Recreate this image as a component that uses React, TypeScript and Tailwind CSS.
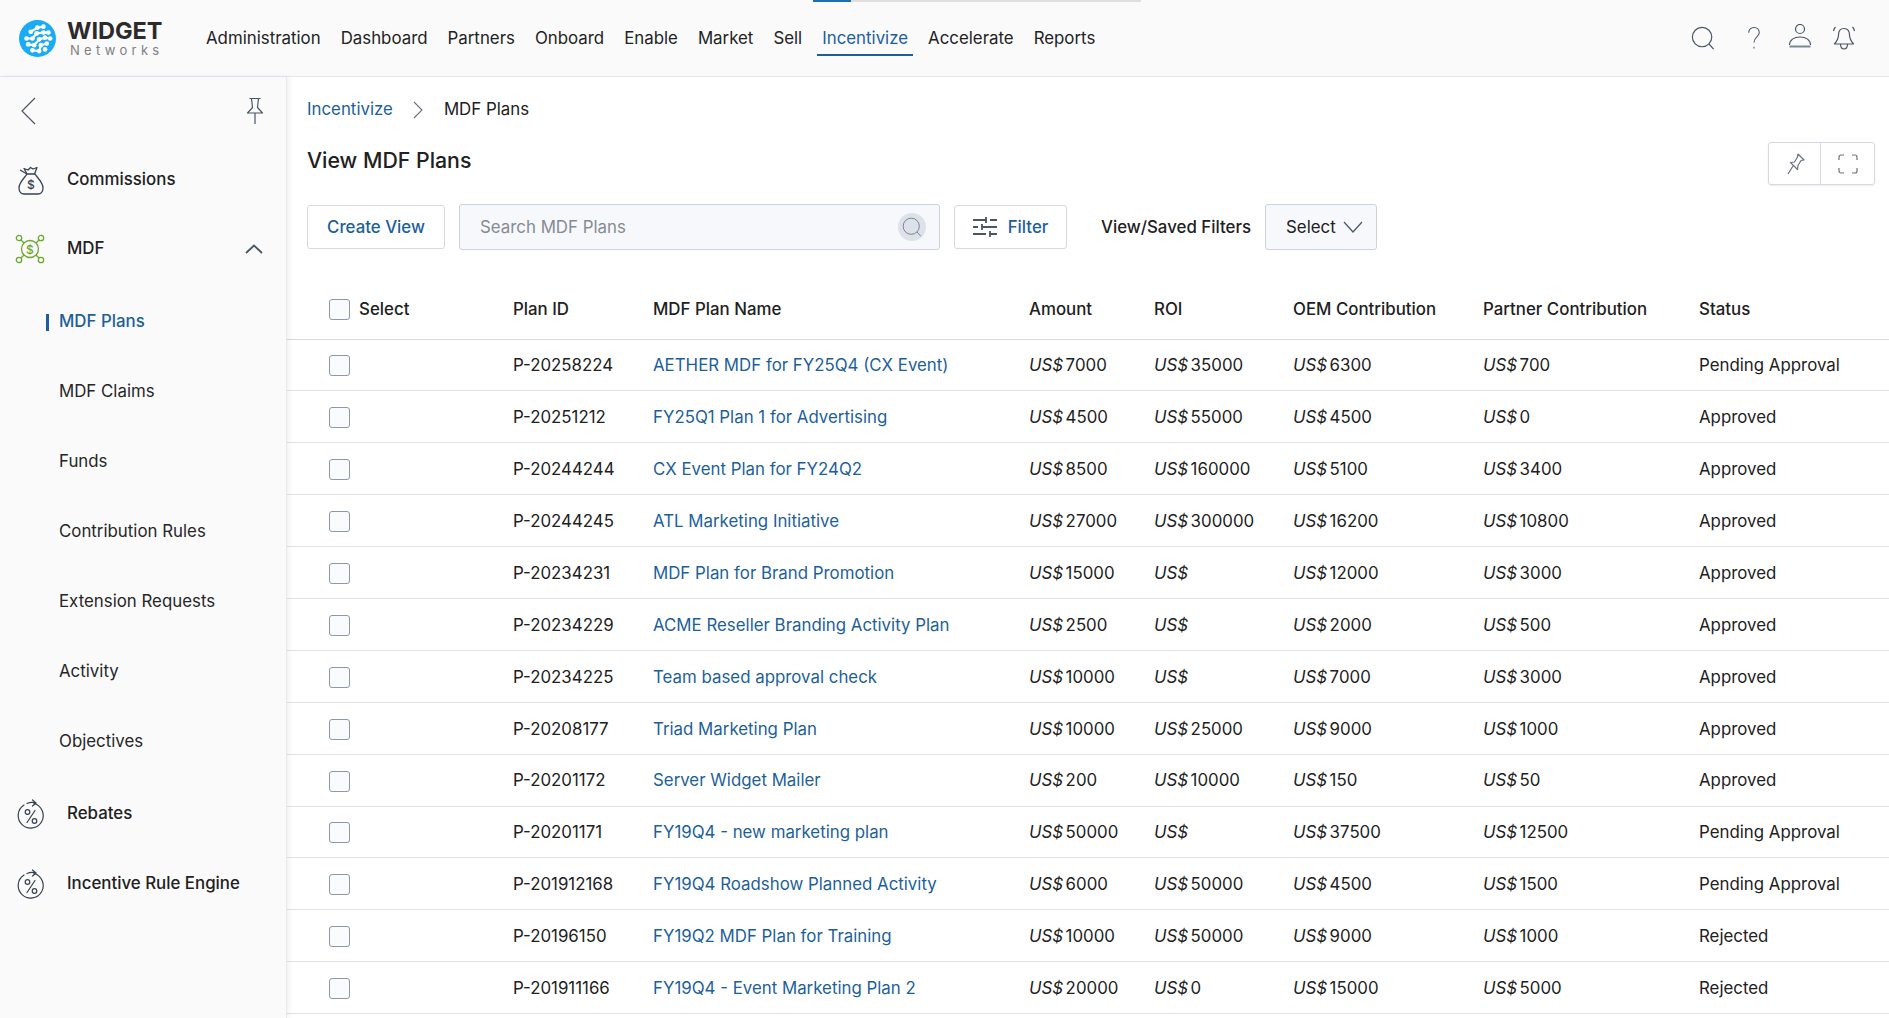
import React from "react";

const navItems = ["Administration", "Dashboard", "Partners", "Onboard", "Enable", "Market", "Sell", "Incentivize", "Accelerate", "Reports"];

const subItems = ["MDF Plans", "MDF Claims", "Funds", "Contribution Rules", "Extension Requests", "Activity", "Objectives"];

const plans = [
  ["P-20258224", "AETHER MDF for FY25Q4 (CX Event)", "7000", "35000", "6300", "700", "Pending Approval"],
  ["P-20251212", "FY25Q1 Plan 1 for Advertising", "4500", "55000", "4500", "0", "Approved"],
  ["P-20244244", "CX Event Plan for FY24Q2", "8500", "160000", "5100", "3400", "Approved"],
  ["P-20244245", "ATL Marketing Initiative", "27000", "300000", "16200", "10800", "Approved"],
  ["P-20234231", "MDF Plan for Brand Promotion", "15000", "", "12000", "3000", "Approved"],
  ["P-20234229", "ACME Reseller Branding Activity Plan", "2500", "", "2000", "500", "Approved"],
  ["P-20234225", "Team based approval check", "10000", "", "7000", "3000", "Approved"],
  ["P-20208177", "Triad Marketing Plan", "10000", "25000", "9000", "1000", "Approved"],
  ["P-20201172", "Server Widget Mailer", "200", "10000", "150", "50", "Approved"],
  ["P-20201171", "FY19Q4 - new marketing plan", "50000", "", "37500", "12500", "Pending Approval"],
  ["P-201912168", "FY19Q4 Roadshow Planned Activity", "6000", "50000", "4500", "1500", "Pending Approval"],
  ["P-20196150", "FY19Q2 MDF Plan for Training", "10000", "50000", "9000", "1000", "Rejected"],
  ["P-201911166", "FY19Q4 - Event Marketing Plan 2", "20000", "0", "15000", "5000", "Rejected"],
];

function Logo() {
  const dots = [
    [22, 9], [29, 8], [14, 14], [21, 16], [29, 15], [35, 15], [9, 22], [16, 22], [24, 23], [31, 21], [37, 22],
    [11, 29], [18, 30], [26, 30], [33, 28], [16, 36], [24, 37], [31, 35],
  ];
  return (
    <svg width="37" height="37" viewBox="0 0 44 44">
      <circle cx="22" cy="22" r="22" fill="#19abf5" />
      <g stroke="#fff" strokeWidth="2.600" strokeLinecap="round" strokeLinejoin="round" fill="none">
        <path d="M14 14 22 9 29 8" />
        <path d="M9 22 16 22 21 16 29 15 35 15" />
        <path d="M11 29 18 30 24 23 31 21 37 22" />
        <path d="M16 36 24 37 26 30 33 28" />
      </g>
      {dots.map(([x, y], i) => (
        <circle key={i} cx={x} cy={y} r="2.800" fill="#fff" />
      ))}
    </svg>
  );
}

function Search({ size = 24, color = "#4b5563" }: { size?: number; color?: string }) {
  return (
    <svg width={size} height={size} viewBox="0 0 26 26" fill="none" stroke={color} strokeWidth="1.300">
      <circle cx="12" cy="12" r="10.500" />
      <path d="M19.500 19.500 24.500 25" />
    </svg>
  );
}

function PinIcon() {
  return (
    <svg width="18" height="28" viewBox="0 0 18 28" fill="none" stroke="#4b5563" strokeWidth="1.200" strokeLinejoin="round">
      <path d="M3.500 1.500h11M5.500 1.500l1 9-5 5.500h15l-5-5.500 1-9M9 16v11" />
    </svg>
  );
}

function BagIcon() {
  return (
    <svg width="26" height="30" viewBox="0 0 26 30" fill="none" stroke="#374151" strokeWidth="1.300" strokeLinejoin="round">
      <path d="M9 9 6 3.500l4 1.500 2.500-2.500L15 4l4-1.500L16.500 9" />
      <path d="M9 9h8c2 3.500 8 8 8 14 0 4-2.500 6-5 6H6c-2.500 0-5-2-5-6 0-6 6-10.500 8-14Z" />
      <path d="M2 5l7 4" />
      <text x="13" y="24" textAnchor="middle" fontSize="12" fontFamily="Inter" fill="#374151" stroke="none">$</text>
    </svg>
  );
}

function MdfIcon() {
  return (
    <svg width="30" height="30" viewBox="0 0 30 30" fill="none" stroke="#6aa82e" strokeWidth="1.300">
      <circle cx="15" cy="15" r="8.500" />
      <circle cx="4" cy="4" r="2.700" />
      <circle cx="26" cy="4" r="2.700" />
      <circle cx="4" cy="26" r="2.700" />
      <circle cx="26" cy="26" r="2.700" />
      <path d="M6 6 9 9M24 6 21 9M6 24 9 21M24 24 21 21" />
      <text x="15" y="19.500" textAnchor="middle" fontSize="12" fontFamily="Inter" fill="#6aa82e" stroke="none">$</text>
    </svg>
  );
}

function RebateIcon() {
  return (
    <svg width="28" height="30" viewBox="0 0 28 30" fill="none" stroke="#374151" strokeWidth="1.200" strokeLinecap="round">
      <path d="M17 4.500A12.500 12.500 0 1 1 7 6" />
      <path d="M10 4.500c3-1.500 6-1.500 9-.5M15.500 1 19 4l-3.500 3" />
      <circle cx="10.500" cy="13" r="2.300" />
      <circle cx="17.500" cy="22" r="2.300" />
      <path d="M18 11.500 10 23.500" />
    </svg>
  );
}

function Money({ value }: { value: string }) {
  return (
    <span>
      <i>US$</i>
      {value && <span className="ml-[2.500px]">{value}</span>}
    </span>
  );
}

function Check() {
  return <span className="block w-[21px] h-[21px] rounded-[3px] border border-[#8c98a8] bg-[#fafbfc]" />;
}

export default function App() {
  return (
    <div className="relative w-[1889px] h-[1018px] overflow-hidden bg-white text-[#212121] font-['Inter',sans-serif] text-[16.850px]">
      {/* page loading bar */}
      <div className="absolute top-0 left-[813px] flex h-[2px] w-[328px]">
        <div className="w-[38px] bg-[#1d6fb0]" />
        <div className="flex-1 bg-[#dedede]" />
      </div>

      <header className="flex items-center h-[77px] bg-[#fafafb] border-b border-[#e1e5ec]">
        <div className="flex items-center w-[206px] pl-[19px] shrink-0">
          <Logo />
          <div className="ml-[11px] flex flex-col items-start">
            <span className="text-[23.500px] leading-[24px] font-bold text-[#2b2b2b]">WIDGET</span>
            <span className="text-[13px] leading-[14px] text-[#808080] tracking-[4.300px] ml-[3px]">Networks</span>
          </div>
        </div>
        <nav className="flex items-center h-full gap-[20px] text-[#222]">
          {navItems.map((n) => (
            <a
              key={n}
              className={
                n === "Incentivize"
                  ? "flex items-center h-[34px] mt-[1px] px-[5px] -mx-[5px] text-[#1d5f9c] border-y-2 border-t-transparent border-b-[#1d5f9c]"
                  : "flex items-center h-[34px] mt-[1px]"
              }
            >
              {n}
            </a>
          ))}
        </nav>
        <div className="ml-auto flex items-center pr-[33px] text-[#4b5563]">
          <Search />
          <svg width="14" height="24" viewBox="0 0 16 26" fill="none" stroke="#4b5563" strokeWidth="1.200" className="ml-[32px]">
            <path d="M2 7c0-3.500 2.500-6 6-6s6 2.500 6 6c0 4-6 5-6 11" />
            <path d="M8 23v2" />
          </svg>
          <svg width="24" height="24" viewBox="0 0 24 24" fill="none" stroke="#4b5563" strokeWidth="1.200" className="ml-[27px] -mt-[4px]">
            <circle cx="12" cy="5" r="4.500" />
            <path d="M1.500 21c0-5 4.500-8 10.500-8s10.500 3 10.500 8" />
            <path d="M1.500 22.500h21" strokeWidth="2" stroke="#7d8694" />
          </svg>
          <svg width="24" height="24" viewBox="0 0 24 24" fill="none" stroke="#4b5563" strokeWidth="1.200" strokeLinejoin="round" className="ml-[20px]">
            <path d="M12 2.500c-4 0-5.500 3-5.500 6.500 0 4-1.500 6-4 9h19c-2.500-3-4-5-4-9 0-3.500-1.500-6.500-5.500-6.500Z" />
            <path d="M8.500 18c0 3 1.500 5 3.500 5s3.500-2 3.500-5M3.500 1C2.500 2 2 3 1.500 5M20.500 1c1 1 1.500 2 2 4" />
          </svg>
        </div>
      </header>

      <div className="flex h-[941px]">
        <aside className="w-[287px] shrink-0 bg-[#fafafb] border-r border-[#e6e9ee] shadow-[2px_0_5px_rgba(120,130,150,0.12)] z-10 pl-[15px]">
          <div className="flex items-center justify-between h-[67px] pr-[22px] pl-[5px]">
            <svg width="16" height="28" viewBox="0 0 16 28" fill="none" stroke="#4b5563" strokeWidth="1.200">
              <path d="M15 1 2 14l13 13" />
            </svg>
            <PinIcon />
          </div>
          <div className="flex items-center h-[72px] font-medium">
            <span className="w-[52px] pl-[3px]"><BagIcon /></span>
            Commissions
          </div>
          <div className="flex items-center h-[66px] font-medium pr-[23px]">
            <span className="w-[52px]"><MdfIcon /></span>
            MDF
            <svg width="18" height="10" viewBox="0 0 18 10" fill="none" stroke="#4b5563" strokeWidth="1.800" className="ml-auto">
              <path d="M1 9 9 1.500 17 9" />
            </svg>
          </div>
          <ul className="mt-[5px]">
            {subItems.map((s, i) => (
              <li key={s} className="flex items-center h-[70px] pl-[31px] relative">
                {i === 0 && <span className="absolute left-[31px] w-[3px] h-[17px] bg-[#1d5f9c]" />}
                <span className={i === 0 ? "pl-[13px] text-[#1d5f9c] font-medium" : "pl-[13px] text-[#262626]"}>{s}</span>
              </li>
            ))}
          </ul>
          <div className="flex items-center h-[72px] font-medium mt-[1px]">
            <span className="w-[52px] pl-[2px]"><RebateIcon /></span>
            Rebates
          </div>
          <div className="flex items-center h-[68px] font-medium">
            <span className="w-[52px] pl-[2px]"><RebateIcon /></span>
            Incentive Rule Engine
          </div>
        </aside>

        <main className="flex-1 min-w-0">
          <div className="flex items-center h-[64px] pl-[20px] pt-[1px]">
            <a className="text-[#1d5f9c]">Incentivize</a>
            <svg width="12" height="20" viewBox="0 0 12 20" fill="none" stroke="#6b7280" strokeWidth="1.100" className="mx-[19.500px]">
              <path d="M2 2l8 8-8 8" />
            </svg>
            <span>MDF Plans</span>
          </div>
          <div className="flex items-start justify-between h-[63px] pl-[20px] pr-[14px]">
            <h1 className="text-[21.300px] font-medium leading-[38px]">View MDF Plans</h1>
            <div className="flex h-[43px] mt-[1px] rounded-[3px] border border-[#d5d9e0] shadow-[0_1px_2px_rgba(0,0,0,0.08)]">
              <span className="flex items-center justify-center w-[52px] pl-[3px] border-r border-[#d5d9e0]">
                <svg width="20" height="22" viewBox="0 0 20 22" fill="none" stroke="#6b7280" strokeWidth="1.200" strokeLinejoin="round">
                  <path d="M12 1l6 6-3 .5-3 5-.5 4L4.500 9.500l4-.5 3-5ZM7 13l-5 8" />
                </svg>
              </span>
              <span className="flex items-center justify-center w-[53px]">
                <svg width="20" height="20" viewBox="0 0 20 20" fill="none" stroke="#6b7280" strokeWidth="1.200">
                  <path d="M1 6V3a2 2 0 0 1 2-2h3M14 1h3a2 2 0 0 1 2 2v3M19 14v3a2 2 0 0 1-2 2h-3M6 19H3a2 2 0 0 1-2-2v-3" />
                </svg>
              </span>
            </div>
          </div>
          <div className="flex items-center h-[46px] pl-[20px]">
            <button className="h-[44px] w-[138px] pt-[2px] rounded-[3px] border border-[#d5d9e0] text-[#1d5f9c] font-medium">Create View</button>
            <div className="flex items-center justify-between w-[481px] h-[46px] ml-[14px] pl-[20px] pr-[13px] rounded-[3px] border border-[#cdd3dc] bg-[#f6f8fb] text-[#868b93]">
              <span className="pt-[2px]">Search MDF Plans</span>
              <span className="flex items-center justify-center w-[28px] h-[28px] rounded-full bg-[#dde2ea]">
                <Search size={20} color="#7b8390" />
              </span>
            </div>
            <button className="flex items-center justify-center gap-[11px] h-[44px] w-[113px] ml-[14px] rounded-[3px] border border-[#d5d9e0] text-[#1d5f9c] font-medium">
              <svg width="24" height="20" viewBox="0 0 24 20" fill="none" stroke="#4b5563" strokeWidth="1.800">
                <path d="M0 3h13M17 3h7M13 0v6M0 10h5M9 10h15M9 7v6M0 17h13M17 17h7M17 14v6" />
              </svg>
              <span className="pt-[2px]">Filter</span>
            </button>
            <span className="ml-[34px] pt-[2px] font-medium">View/Saved Filters</span>
            <div className="flex items-center justify-between w-[112px] h-[46px] ml-[14px] pl-[20px] pr-[13px] rounded-[3px] border border-[#cdd3dc] bg-[#f6f8fb]">
              <span className="pt-[2px]">Select</span>
              <svg width="20" height="12" viewBox="0 0 20 12" fill="none" stroke="#4b5563" strokeWidth="1.200">
                <path d="M1 1l9 10 9-10" />
              </svg>
            </div>
          </div>

          <table className="w-full table-fixed border-collapse mt-[7px]">
            <colgroup>
              <col className="w-[226px]" />
              <col className="w-[140px]" />
              <col className="w-[376px]" />
              <col className="w-[125px]" />
              <col className="w-[139px]" />
              <col className="w-[190px]" />
              <col className="w-[216px]" />
              <col />
            </colgroup>
            <thead>
              <tr className="h-[82px] border-b border-[#d4d8de] text-left">
                <th className="font-medium align-bottom pb-[16px]">
                  <span className="flex items-center gap-[9px] pl-[42px]">
                    <Check />
                    Select
                  </span>
                </th>
                <th className="font-medium align-bottom pb-[16px]">Plan ID</th>
                <th className="font-medium align-bottom pb-[16px]">MDF Plan Name</th>
                <th className="font-medium align-bottom pb-[16px]">Amount</th>
                <th className="font-medium align-bottom pb-[16px]">ROI</th>
                <th className="font-medium align-bottom pb-[16px]">OEM Contribution</th>
                <th className="font-medium align-bottom pb-[16px]">Partner Contribution</th>
                <th className="font-medium align-bottom pb-[16px]">Status</th>
              </tr>
            </thead>
            <tbody>
              {plans.map((p) => (
                <tr key={p[0]} className="h-[51.900px] border-b border-[#dfe2e7]">
                  <td className="pl-[42px] pt-[2px]"><Check /></td>
                  <td className="pt-[2px]">{p[0]}</td>
                  <td className="pt-[2px] text-[#1d5f9c]">{p[1]}</td>
                  <td className="pt-[2px]"><Money value={p[2]} /></td>
                  <td className="pt-[2px]"><Money value={p[3]} /></td>
                  <td className="pt-[2px]"><Money value={p[4]} /></td>
                  <td className="pt-[2px]"><Money value={p[5]} /></td>
                  <td className="pt-[2px]">{p[6]}</td>
                </tr>
              ))}
            </tbody>
          </table>
        </main>
      </div>
    </div>
  );
}
